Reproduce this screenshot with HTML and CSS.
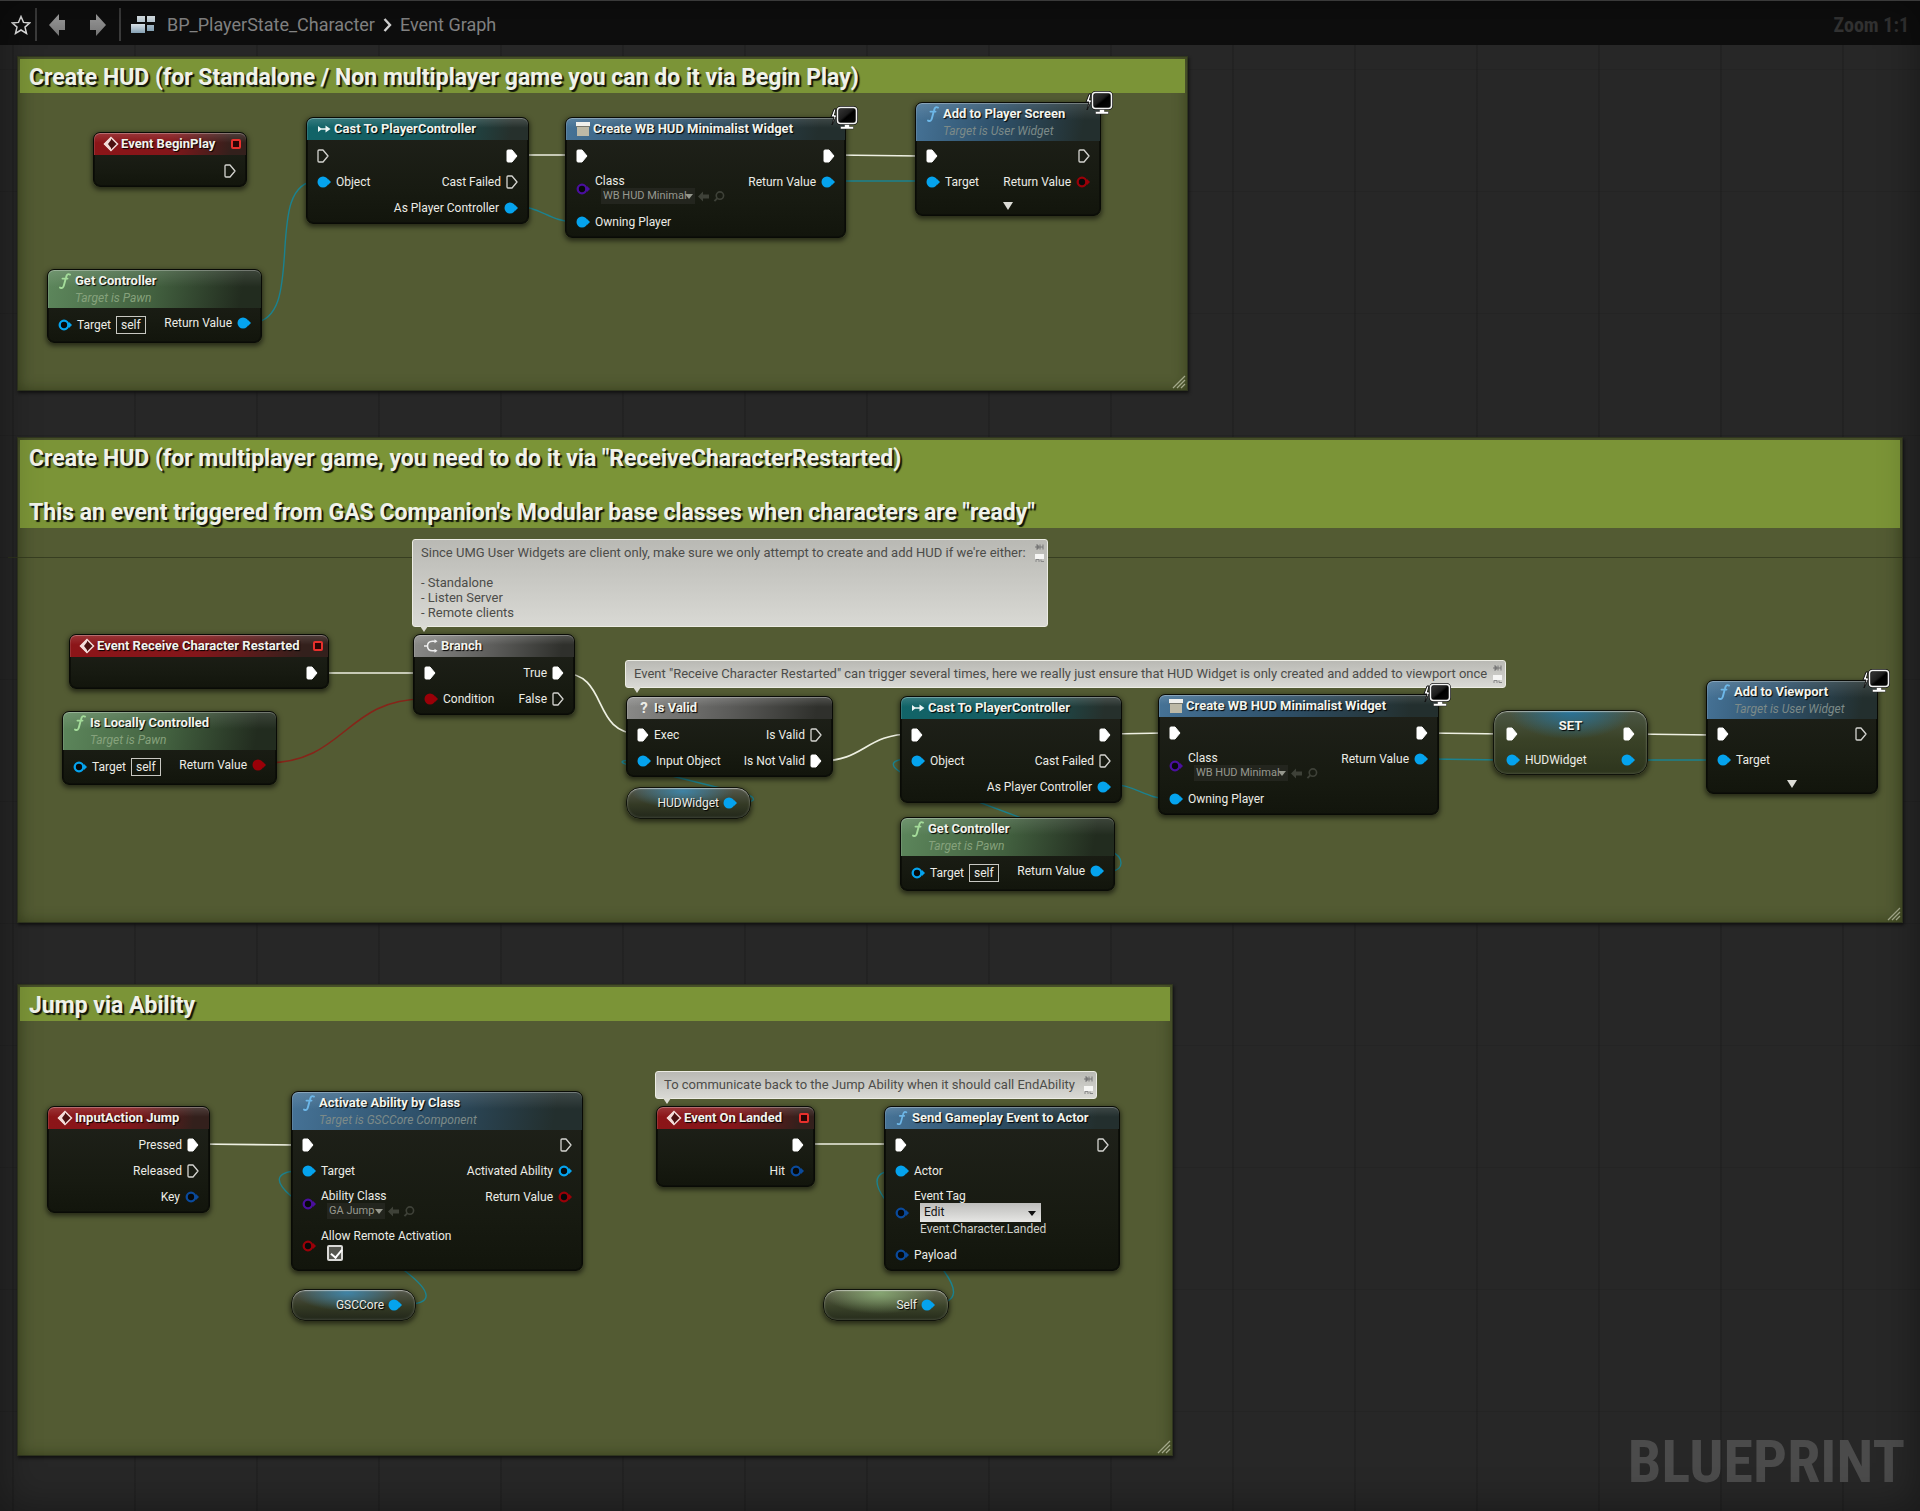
FILE: index.html
```html
<!DOCTYPE html>
<html lang="en">
<head>
<meta charset="utf-8">
<title>BP_PlayerState_Character - Event Graph</title>
<link rel="stylesheet" href="styles.css">
</head>
<body>
<svg class="defs" aria-hidden="true">
  <defs>
    <linearGradient id="screen" x1="0" y1="0" x2="1" y2="1"><stop offset="0" stop-color="#3a3a3a"/><stop offset=".45" stop-color="#1c1c1c"/><stop offset=".55" stop-color="#000"/><stop offset="1" stop-color="#0a0a0a"/></linearGradient>
    <linearGradient id="tile" x1="0" y1="0" x2="0" y2="1"><stop offset="0" stop-color="#e4edf2"/><stop offset="1" stop-color="#86a3b6"/></linearGradient>
    <linearGradient id="arrowfill" x1="0" y1="0" x2="0" y2="1"><stop offset="0" stop-color="#a5a5a5"/><stop offset="1" stop-color="#757575"/></linearGradient>
    <symbol id="exec" viewBox="0 0 12 14"><path d="M1 2q0-1 1-1h4l5 6-5 6H2q-1 0-1-1z" fill="none" stroke="#d4d4d0" stroke-width="1.3" stroke-linejoin="round"/></symbol>
    <symbol id="exec-on" viewBox="0 0 12 14"><path d="M1 2q0-1 1-1h4l5 6-5 6H2q-1 0-1-1z" fill="#fff" stroke="#fff" stroke-linejoin="round"/></symbol>
    <symbol id="pin" viewBox="0 0 14 12"><circle cx="6" cy="6" r="4.3" fill="#06090a" stroke="currentColor" stroke-width="2.3"/><path d="M11 3l3 3-3 3z" fill="currentColor"/></symbol>
    <symbol id="pin-on" viewBox="0 0 14 12"><circle cx="6" cy="6" r="5.5" fill="currentColor"/><path d="M10.500 2.500l3.500 3.500-3.500 3.500z" fill="currentColor"/></symbol>
    <symbol id="fn" viewBox="0 0 16 18"><path d="M13 2.600C10.500 1.200 9.600 3 9 5.500L7 13c-.7 3-1.800 3.600-4 2.600M5.500 6.600h5" fill="none" stroke="currentColor" stroke-width="1.900" stroke-linecap="round"/></symbol>
    <symbol id="event" viewBox="0 0 16 16"><path d="M8 1.500L14.500 8 8 14.500 1.500 8z" fill="#4a1010" stroke="#f3dcd9" stroke-width="1.500"/><path d="M8 1L1 8l7 7V12L5 8l3-4z" fill="#f3dcd9"/></symbol>
    <symbol id="cast" viewBox="0 0 16 12"><path d="M2 3l4 3-4 3zM5 5.300h5v1.400H5zM9.500 2.500l5 3.500-5 3.500z" fill="#eef6f6"/></symbol>
    <symbol id="widget" viewBox="0 0 16 16"><path d="M1 1h14v4H1z" fill="#f0f0ec"/><path d="M2 6h12v9H2z" fill="#bdb9a6"/><path d="M1 5h14v1H1z" fill="#77776d"/></symbol>
    <symbol id="branch" viewBox="0 0 16 16"><path d="M1 8h3M13 3.200H9.500C6 3.200 4.500 5.500 4.500 8s1.500 4.800 5 4.800H13" fill="none" stroke="#eee" stroke-width="1.600"/><path d="M11.500 1.200L14.500 3.200l-3 2zM11.500 10.800l3 2-3 2z" fill="#eee"/></symbol>
    <symbol id="back" viewBox="0 0 12 10"><path d="M0 5l5-5v3h6v4H5v3z" fill="currentColor"/></symbol>
    <symbol id="find" viewBox="0 0 12 12"><circle cx="7" cy="5" r="4" fill="none" stroke="currentColor" stroke-width="1.800"/><path d="M4 8l-3 3" stroke="currentColor" stroke-width="2"/></symbol>
    <symbol id="caret" viewBox="0 0 8 5"><path d="M0 0h8L4 5z" fill="currentColor"/></symbol>
    <symbol id="caret-lg" viewBox="0 0 10 8"><path d="M0 0h10L5 8z" fill="currentColor"/></symbol>
    <symbol id="monitor" viewBox="0 0 28 24"><path d="M4 3L1 11h3l-2 8 5-10H4.500L6 3z" fill="#fff" stroke="#111"/><rect x="7.500" y="1.500" width="19" height="16" rx="3" fill="url(#screen)" stroke="#111" stroke-width="3"/><rect x="7.500" y="1.500" width="19" height="16" rx="3" fill="none" stroke="#f4f4f4" stroke-width="1.500"/><path d="M14.500 18.500h5v2h4V23h-13v-2.500h4z" fill="#fff" stroke="#222" stroke-width=".5"/></symbol>
    <symbol id="grip" viewBox="0 0 14 14"><path d="M1 13L13 1M5 13l8-8M9 13l4-4" stroke="#a3a88a" stroke-width="1.300"/></symbol>
    <symbol id="thumb" viewBox="0 0 10 22"><path d="M0 5h2M2 2.500v5L4.500 5zM5 2.500v5M8 2.500v5M5 5h3" stroke="#777" fill="#777"/><path d="M0 12h9v5H0z" fill="#f6f6f4"/><path d="M1 20V17.500h3V20M6 17.500V19.500h3" stroke="#888" fill="none"/></symbol>
  </defs>
</svg>

<main class="graph">
  <header class="toolbar">
    <button class="tool" aria-label="Favorite"><svg width="20" height="20" viewBox="0 0 20 20"><path d="M10 1.500l2.500 5.900 6.300.5-4.800 4.200 1.500 6.300-5.500-3.400-5.500 3.400L6 12.100 1.200 7.900l6.300-.5z" fill="none" stroke="#e6e6e6" stroke-width="1.500"/></svg></button>
    <span class="divider"></span>
    <button class="tool nav" aria-label="Back"><svg width="17" height="22" viewBox="0 0 17 22"><path d="M0 11L10 0v6h6v10h-6v6z" fill="url(#arrowfill)"/></svg></button>
    <button class="tool nav" aria-label="Forward"><svg width="17" height="22" viewBox="0 0 17 22"><path d="M17 11L7 0v6H1v10h6v6z" fill="url(#arrowfill)"/></svg></button>
    <span class="divider"></span>
    <nav class="crumbs">
      <svg width="24" height="20" viewBox="0 0 24 20"><path d="M6 1h8v6H6zM16 1h8v6h-8zM16 10h7v6h-7z" fill="url(#tile)"/><path d="M0 9h14v9H0z" fill="url(#tile)"/></svg>
      <a href="#">BP_PlayerState_Character</a>
      <svg width="9" height="14" viewBox="0 0 9 14"><path d="M1.500 1L7 7l-5.500 6" fill="none" stroke="#d8d8d8" stroke-width="2.400"/></svg>
      <a href="#">Event Graph</a>
    </nav>
    <span class="zoom">Zoom 1:1</span>
  </header>

  <section class="comment c-standalone"><h2>Create HUD (for Standalone / Non multiplayer game you can do it via Begin Play)</h2><svg class="grip"><use href="#grip"/></svg></section>
  <section class="comment c-multi"><h2>Create HUD (for multiplayer game, you need to do it via "ReceiveCharacterRestarted)<br><br>This an event triggered from GAS Companion's Modular base classes when characters are "ready"</h2><svg class="grip"><use href="#grip"/></svg></section>
  <section class="comment c-jump"><h2>Jump via Ability</h2><svg class="grip"><use href="#grip"/></svg></section>

  <svg class="wires" aria-hidden="true">
    <path class="axis" d="M8 557.500H1903"/>
    <g class="w-exec">
      <path d="M520 155H570M835 155L920 156M318 673H418M562 673C610 673 590 734 640 734M820 761C865 761 865 734 912 734M1110 734L1164 733M1428 733L1506 734M1634 734L1712 735M198 1144L296 1145M800 1144H890"/>
    </g>
    <g class="w-obj">
      <path d="M250 323C310 323 260 182 317 181M515 206C540 206 550 222 576 222M840 181H920M1108 784C1135 784 1145 799 1170 799M1430 759L1506 760M1634 760H1712"/>
      <path d="M736 802H748C756 801 754 797 748 795L636 767C616 762 618 760 640 760"/>
      <path d="M1100 871H1112C1124 870 1124 857 1112 852L904 774C888 766 890 759 910 759"/>
      <path d="M400 1304C438 1306 430 1290 405 1271L291 1196C270 1178 280 1171 300 1171"/>
      <path d="M930 1304C964 1304 954 1285 944 1271L884 1198C870 1178 878 1170 900 1170"/>
    </g>
    <path class="w-bool" d="M266 763C345 763 345 699 424 699"/>
  </svg>

  <!-- Standalone group -->
  <article class="node red n-begin">
    <header><svg class="ico"><use href="#event"/></svg><h3>Event BeginPlay</h3><i class="delegate"></i></header>
    <div class="pins"><div class="out"><div class="row"><svg class="exec"><use href="#exec"/></svg></div></div></div>
  </article>

  <article class="node teal n-cast1">
    <header><svg class="ico"><use href="#cast"/></svg><h3>Cast To PlayerController</h3></header>
    <div class="pins">
      <div class="in"><div class="row"><svg class="exec"><use href="#exec"/></svg></div><div class="row"><svg class="pin obj"><use href="#pin-on"/></svg>Object</div></div>
      <div class="out"><div class="row"><svg class="exec"><use href="#exec-on"/></svg></div><div class="row">Cast Failed<svg class="exec"><use href="#exec"/></svg></div><div class="row">As Player Controller<svg class="pin obj"><use href="#pin-on"/></svg></div></div>
    </div>
  </article>

  <article class="node blue n-create1">
    <header><svg class="ico"><use href="#widget"/></svg><h3>Create WB HUD Minimalist Widget</h3></header>
    <svg class="badge"><use href="#monitor"/></svg>
    <div class="pins">
      <div class="in">
        <div class="row"><svg class="exec"><use href="#exec-on"/></svg></div>
        <div class="row field"><svg class="pin class"><use href="#pin"/></svg><div class="stack"><label for="class1">Class</label><div class="asset"><span class="pick"><select id="class1" class="wide"><option>WB HUD Minimalist</option></select><svg><use href="#caret"/></svg></span><button aria-label="Use selected"><svg><use href="#back"/></svg></button><button aria-label="Browse"><svg><use href="#find"/></svg></button></div></div></div>
        <div class="row"><svg class="pin obj"><use href="#pin-on"/></svg>Owning Player</div>
      </div>
      <div class="out"><div class="row"><svg class="exec"><use href="#exec-on"/></svg></div><div class="row">Return Value<svg class="pin obj"><use href="#pin-on"/></svg></div></div>
    </div>
  </article>

  <article class="node blue tall n-screen">
    <header><svg class="ico"><use href="#fn"/></svg><h3>Add to Player Screen</h3><p>Target is User Widget</p></header>
    <svg class="badge"><use href="#monitor"/></svg>
    <div class="pins">
      <div class="in"><div class="row"><svg class="exec"><use href="#exec-on"/></svg></div><div class="row"><svg class="pin obj"><use href="#pin-on"/></svg>Target</div></div>
      <div class="out"><div class="row"><svg class="exec"><use href="#exec"/></svg></div><div class="row">Return Value<svg class="pin bool"><use href="#pin"/></svg></div></div>
    </div>
    <button class="more" aria-label="Show advanced"><svg><use href="#caret-lg"/></svg></button>
  </article>

  <article class="node green tall n-getc1">
    <header><svg class="ico"><use href="#fn"/></svg><h3>Get Controller</h3><p>Target is Pawn</p></header>
    <div class="pins">
      <div class="in"><div class="row self-row"><svg class="pin obj"><use href="#pin"/></svg>Target<span class="self">self</span></div></div>
      <div class="out"><div class="row">Return Value<svg class="pin obj"><use href="#pin-on"/></svg></div></div>
    </div>
  </article>

  <!-- Multiplayer group -->
  <article class="node red n-restart">
    <header><svg class="ico"><use href="#event"/></svg><h3>Event Receive Character Restarted</h3><i class="delegate"></i></header>
    <div class="pins"><div class="out"><div class="row"><svg class="exec"><use href="#exec-on"/></svg></div></div></div>
  </article>

  <article class="node green tall n-local">
    <header><svg class="ico"><use href="#fn"/></svg><h3>Is Locally Controlled</h3><p>Target is Pawn</p></header>
    <div class="pins">
      <div class="in"><div class="row self-row"><svg class="pin obj"><use href="#pin"/></svg>Target<span class="self">self</span></div></div>
      <div class="out"><div class="row">Return Value<svg class="pin bool"><use href="#pin-on"/></svg></div></div>
    </div>
  </article>

  <article class="node grey n-branch">
    <header><svg class="ico"><use href="#branch"/></svg><h3>Branch</h3></header>
    <div class="pins">
      <div class="in"><div class="row"><svg class="exec"><use href="#exec-on"/></svg></div><div class="row"><svg class="pin bool"><use href="#pin-on"/></svg>Condition</div></div>
      <div class="out"><div class="row">True<svg class="exec"><use href="#exec-on"/></svg></div><div class="row">False<svg class="exec"><use href="#exec"/></svg></div></div>
    </div>
  </article>

  <article class="node grey n-valid">
    <header><span class="ico q">?</span><h3>Is Valid</h3></header>
    <div class="pins">
      <div class="in"><div class="row"><svg class="exec"><use href="#exec-on"/></svg>Exec</div><div class="row"><svg class="pin obj"><use href="#pin-on"/></svg>Input Object</div></div>
      <div class="out"><div class="row">Is Valid<svg class="exec"><use href="#exec"/></svg></div><div class="row">Is Not Valid<svg class="exec"><use href="#exec-on"/></svg></div></div>
    </div>
  </article>

  <article class="var glow-blue n-hud">HUDWidget<svg class="pin obj"><use href="#pin-on"/></svg></article>

  <article class="node teal n-cast2">
    <header><svg class="ico"><use href="#cast"/></svg><h3>Cast To PlayerController</h3></header>
    <div class="pins">
      <div class="in"><div class="row"><svg class="exec"><use href="#exec-on"/></svg></div><div class="row"><svg class="pin obj"><use href="#pin-on"/></svg>Object</div></div>
      <div class="out"><div class="row"><svg class="exec"><use href="#exec-on"/></svg></div><div class="row">Cast Failed<svg class="exec"><use href="#exec"/></svg></div><div class="row">As Player Controller<svg class="pin obj"><use href="#pin-on"/></svg></div></div>
    </div>
  </article>

  <article class="node green tall n-getc2">
    <header><svg class="ico"><use href="#fn"/></svg><h3>Get Controller</h3><p>Target is Pawn</p></header>
    <div class="pins">
      <div class="in"><div class="row self-row"><svg class="pin obj"><use href="#pin"/></svg>Target<span class="self">self</span></div></div>
      <div class="out"><div class="row">Return Value<svg class="pin obj"><use href="#pin-on"/></svg></div></div>
    </div>
  </article>

  <aside class="bubble b-once"><p>Event "Receive Character Restarted" can trigger several times, here we really just ensure that HUD Widget is only created and added to viewport once</p><svg><use href="#thumb"/></svg></aside>

  <article class="node blue n-create2">
    <header><svg class="ico"><use href="#widget"/></svg><h3>Create WB HUD Minimalist Widget</h3></header>
    <svg class="badge"><use href="#monitor"/></svg>
    <div class="pins">
      <div class="in">
        <div class="row"><svg class="exec"><use href="#exec-on"/></svg></div>
        <div class="row field"><svg class="pin class"><use href="#pin"/></svg><div class="stack"><label for="class2">Class</label><div class="asset"><span class="pick"><select id="class2" class="wide"><option>WB HUD Minimalist</option></select><svg><use href="#caret"/></svg></span><button aria-label="Use selected"><svg><use href="#back"/></svg></button><button aria-label="Browse"><svg><use href="#find"/></svg></button></div></div></div>
        <div class="row"><svg class="pin obj"><use href="#pin-on"/></svg>Owning Player</div>
      </div>
      <div class="out"><div class="row"><svg class="exec"><use href="#exec-on"/></svg></div><div class="row">Return Value<svg class="pin obj"><use href="#pin-on"/></svg></div></div>
    </div>
  </article>

  <article class="set n-set">
    <h3>SET</h3>
    <div class="pins">
      <div class="in"><div class="row"><svg class="exec"><use href="#exec-on"/></svg></div><div class="row"><svg class="pin obj"><use href="#pin-on"/></svg>HUDWidget</div></div>
      <div class="out"><div class="row"><svg class="exec"><use href="#exec-on"/></svg></div><div class="row"><svg class="pin obj"><use href="#pin-on"/></svg></div></div>
    </div>
  </article>

  <article class="node blue tall n-viewport">
    <header><svg class="ico"><use href="#fn"/></svg><h3>Add to Viewport</h3><p>Target is User Widget</p></header>
    <svg class="badge"><use href="#monitor"/></svg>
    <div class="pins">
      <div class="in"><div class="row"><svg class="exec"><use href="#exec-on"/></svg></div><div class="row"><svg class="pin obj"><use href="#pin-on"/></svg>Target</div></div>
      <div class="out"><div class="row"><svg class="exec"><use href="#exec"/></svg></div></div>
    </div>
    <button class="more" aria-label="Show advanced"><svg><use href="#caret-lg"/></svg></button>
  </article>

  <aside class="bubble b-clients"><p>Since UMG User Widgets are client only, make sure we only attempt to create and add HUD if we're either:<br><br>- Standalone<br>- Listen Server<br>- Remote clients</p><svg><use href="#thumb"/></svg></aside>

  <!-- Jump group -->
  <article class="node red n-input">
    <header><svg class="ico"><use href="#event"/></svg><h3>InputAction Jump</h3></header>
    <div class="pins"><div class="out"><div class="row">Pressed<svg class="exec"><use href="#exec-on"/></svg></div><div class="row">Released<svg class="exec"><use href="#exec"/></svg></div><div class="row">Key<svg class="pin struct"><use href="#pin"/></svg></div></div></div>
  </article>

  <article class="node blue tall n-activate">
    <header><svg class="ico"><use href="#fn"/></svg><h3>Activate Ability by Class</h3><p>Target is GSCCore Component</p></header>
    <div class="pins">
      <div class="in">
        <div class="row"><svg class="exec"><use href="#exec-on"/></svg></div>
        <div class="row"><svg class="pin obj"><use href="#pin-on"/></svg>Target</div>
        <div class="row field"><svg class="pin class"><use href="#pin"/></svg><div class="stack"><label for="ability">Ability Class</label><div class="asset"><span class="pick"><select id="ability" class="narrow"><option>GA Jump</option></select><svg><use href="#caret"/></svg></span><button aria-label="Use selected"><svg><use href="#back"/></svg></button><button aria-label="Browse"><svg><use href="#find"/></svg></button></div></div></div>
        <div class="row check-row"><svg class="pin bool"><use href="#pin"/></svg><div class="stack"><label for="remote">Allow Remote Activation</label><input id="remote" type="checkbox" checked></div></div>
      </div>
      <div class="out"><div class="row"><svg class="exec"><use href="#exec"/></svg></div><div class="row">Activated Ability<svg class="pin obj"><use href="#pin"/></svg></div><div class="row">Return Value<svg class="pin bool"><use href="#pin"/></svg></div></div>
    </div>
  </article>

  <article class="var glow-blue n-core">GSCCore<svg class="pin obj"><use href="#pin-on"/></svg></article>

  <article class="node red n-landed">
    <header><svg class="ico"><use href="#event"/></svg><h3>Event On Landed</h3><i class="delegate"></i></header>
    <div class="pins"><div class="out"><div class="row"><svg class="exec"><use href="#exec-on"/></svg></div><div class="row">Hit<svg class="pin struct"><use href="#pin"/></svg></div></div></div>
  </article>

  <article class="node blue n-send">
    <header><svg class="ico"><use href="#fn"/></svg><h3>Send Gameplay Event to Actor</h3></header>
    <div class="pins">
      <div class="in">
        <div class="row"><svg class="exec"><use href="#exec-on"/></svg></div>
        <div class="row"><svg class="pin obj"><use href="#pin-on"/></svg>Actor</div>
        <div class="row tag-row"><svg class="pin struct"><use href="#pin"/></svg><div class="stack"><label for="tag">Event Tag</label><span class="pick edit"><select id="tag"><option>Edit</option></select><svg><use href="#caret"/></svg></span><span class="tag">Event.Character.Landed</span></div></div>
        <div class="row"><svg class="pin struct"><use href="#pin"/></svg>Payload</div>
      </div>
      <div class="out"><div class="row"><svg class="exec"><use href="#exec"/></svg></div></div>
    </div>
  </article>

  <article class="var glow-green n-self">Self<svg class="pin obj"><use href="#pin-on"/></svg></article>

  <aside class="bubble b-jump"><p>To communicate back to the Jump Ability when it should call EndAbility</p><svg><use href="#thumb"/></svg></aside>

  <div class="watermark">BLUEPRINT</div>
</main>
</body>
</html>
```
FILE: styles.css
```css
* { box-sizing: border-box; }
body { margin: 0; background: #262626; color: #ecece6; font: 12px/14px Roboto, "Liberation Sans", sans-serif; }
h2, h3, p { margin: 0; }
svg { display: block; flex: none; }
button { border: 0; padding: 0; background: none; color: inherit; }
.defs { position: absolute; width: 0; height: 0; }

/* Canvas */
.graph {
  position: relative;
  min-height: 100vh;
  overflow: hidden;
  border-top: 1px solid #3a3a3a;
  background:
    repeating-linear-gradient(90deg, transparent 0 12px, rgba(0,0,0,.12) 12px 14px, transparent 14px 122px),
    repeating-linear-gradient(180deg, transparent 0 68px, rgba(0,0,0,.08) 68px 69px, transparent 69px 122px),
    #272727;
}
.graph::after {
  content: "";
  position: absolute;
  inset: 0;
  box-shadow: inset 0 0 36px 4px rgba(0,0,0,.35);
  pointer-events: none;
}

/* Toolbar */
.toolbar { display: flex; align-items: center; height: 44px; padding: 3px 11px 0; background: #0e0e0e; }
.tool { width: 20px; height: 22px; display: flex; align-items: center; justify-content: center; }
.nav { width: 40px; }
.divider { width: 2px; height: 33px; margin: 0 0 0 4px; background: #3c3c3c; }
.nav + .divider { margin-left: 2px; }
.crumbs { display: flex; align-items: center; gap: 8px; margin-left: 10px; font-size: 18px; line-height: 22px; }
.crumbs a { color: #868686; text-decoration: none; }
.crumbs a:first-of-type { margin-left: 4px; }
.zoom { margin-left: auto; color: #333; font: bold 20px/22px "Roboto Condensed", Roboto, sans-serif; }

/* Comment boxes */
.comment {
  position: absolute;
  border: 1px solid #30361f;
  background: #535b33;
  box-shadow: 1px 2px 3px #111, inset 0 0 14px rgba(38,48,14,.6);
}
.comment h2 {
  margin: 2px;
  padding: 5px 9px 2px;
  background: #7b9437;
  color: #f0f2ea;
  font-size: 23px;
  line-height: 27px;
  font-weight: 700;
  text-shadow: 2px 2px 1px #10140a;
}
.grip { position: absolute; right: 1px; bottom: 1px; width: 14px; height: 14px; }
.c-standalone { left: 17px; top: 55px; width: 1171px; height: 335px; }
.c-multi { left: 17px; top: 436px; width: 1886px; height: 486px; }
.c-jump { left: 17px; top: 983px; width: 1156px; height: 472px; }

/* Wires */
.wires { position: absolute; left: 0; top: -1px; width: 100%; height: 100%; fill: none; }
.axis { stroke: #31371d; opacity: .8; }
.w-exec { stroke: #eef0e2; stroke-width: 1.7; }
.w-obj { stroke: #1b8290; stroke-width: 1.4; }
.w-bool { stroke: #862419; stroke-width: 1.5; }

/* Nodes */
.node {
  position: absolute;
  border: 1px solid #090b06;
  border-radius: 7px;
  background: linear-gradient(#20221b, #171a11 70%, #12150c);
  box-shadow: 0 2px 5px 1px rgba(0,0,0,.55), inset 0 0 0 1px #0d0f09;
}
.node header {
  display: grid;
  grid-template-columns: 16px 1fr auto;
  column-gap: 2px;
  align-items: center;
  height: 22px;
  padding: 0 5px 0 9px;
  border-radius: 6px 6px 0 0;
  box-shadow: inset 0 1px 0 rgba(255,255,255,.28), inset 1px 0 0 rgba(255,255,255,.12);
}
.tall header { height: 38px; grid-template-rows: 22px 12px; align-content: start; }
.node h3, .set h3 { font-size: 13px; line-height: 22px; font-weight: 700; color: #f2f4ee; text-shadow: 1px 1px 1px #000; white-space: nowrap; }
.node p { grid-column: 2; font-style: italic; color: #7c8a88; white-space: nowrap; }
.green p { color: #86a27c; }
.ico { width: 16px; height: 16px; }
.tall .ico { height: 18px; }
.q { font: bold 15px/17px Roboto, sans-serif; text-align: center; }
.red header { background: linear-gradient(rgba(255,255,255,.14), transparent 45%), linear-gradient(100deg, #8c1518, #84161a 50%, #33201c 90%); }
.teal header { background: linear-gradient(rgba(255,255,255,.16), transparent 45%), linear-gradient(100deg, #116468, #175c60 50%, #26302c 92%); }
.blue header { background: linear-gradient(rgba(255,255,255,.12), transparent 45%), linear-gradient(100deg, #467397, #2e5069 45%, #232f2e 90%); }
.green header { background: linear-gradient(rgba(255,255,255,.12), transparent 45%), linear-gradient(100deg, #5d875c, #42603f 50%, #222c1f 90%); }
.grey header { background: linear-gradient(rgba(255,255,255,.16), transparent 45%), linear-gradient(100deg, #8a8a88, #5c5c5a 50%, #2f302c 92%); }
.blue .ico { color: #6db7e8; }
.green .ico { color: #a4dc9a; }
.delegate { width: 10px; height: 10px; border: 2px solid #e8302c; border-radius: 2px; background: #2a0505; }
.badge { position: absolute; top: -12px; right: -13px; width: 28px; height: 24px; }

.pins { display: flex; justify-content: space-between; padding: 3px 10px 2px; white-space: nowrap; }
.tall .pins { padding: 2px 10px; }
.in, .out { display: flex; flex-direction: column; }
.out { align-items: flex-end; margin-left: auto; }
.row { display: flex; align-items: center; gap: 5px; height: 26px; }
.self-row { height: 30px; }
.exec { width: 12px; height: 14px; }
.pin { width: 14px; height: 12px; }
.obj { color: #05a3ee; }
.bool { color: #9a0008; }
.class { color: #4a0f9e; }
.struct { color: #0a4a9c; }
.self { border: 1px solid #c8c8c2; padding: 1px 4px; }
.field { height: 40px; }
.check-row { height: 44px; }
.tag-row { height: 58px; }
.stack { display: flex; flex-direction: column; align-self: stretch; align-items: flex-start; padding-top: 5px; }
.asset { display: flex; align-items: center; gap: 3px; margin-left: 6px; color: #3e4138; }
.asset button svg { width: 12px; height: 11px; }
.pick { position: relative; display: block; color: #96988e; }
.pick select { appearance: none; display: block; height: 16px; border: 0; margin: 0; padding: 0 8px 0 2px; background: #23251e; color: inherit; font: 11px/16px Roboto, sans-serif; overflow: hidden; }
.pick .wide { width: 94px; }
.pick .narrow { width: 58px; }
.pick svg { position: absolute; right: 2px; top: 6px; width: 8px; height: 5px; pointer-events: none; }
.edit { margin-left: 6px; color: #111; }
.edit select { width: 121px; height: 19px; padding-left: 4px; background: linear-gradient(#bdbdbb, #e6e6e4); font: 12px/19px Roboto, sans-serif; }
.edit svg { right: 5px; top: 8px; }
.tag { margin-left: 6px; color: #cfd0ca; }
.check-row input {
  appearance: none;
  position: relative;
  width: 16px;
  height: 16px;
  margin: 2px 0 0 6px;
  border: 2px solid #d9d9d6;
  border-radius: 2px;
  background: #55564f;
}
.check-row input::after { content: ""; position: absolute; left: 4px; top: 0; width: 5px; height: 9px; border: solid #fff; border-width: 0 2px 2px 0; transform: rotate(40deg); }
.more { display: block; width: 100%; height: 18px; color: #dcdcd6; }
.more svg { width: 10px; height: 8px; margin: 0 auto; }

/* Variable getters and setter */
.var, .set {
  position: absolute;
  border: 1px solid #10130b;
  border-radius: 14px;
  box-shadow: 0 2px 5px 1px rgba(0,0,0,.55), inset 0 1px 1px rgba(255,255,255,.45), inset 0 0 3px rgba(255,255,255,.25);
}
.var { display: flex; align-items: center; justify-content: flex-end; gap: 4px; height: 32px; padding-right: 13px; text-shadow: 1px 1px 1px #000; }
.glow-blue { background: radial-gradient(ellipse 42% 60% at 45% 10%, #3f83a5, transparent), linear-gradient(#55584c, #343a25 55%, #22271a); }
.glow-green { background: radial-gradient(ellipse 45% 70% at 45% 10%, #86a572, transparent), linear-gradient(#62664f, #3b432a 55%, #262c1b); }
.set { height: 65px; padding-top: 10px; background: radial-gradient(ellipse 40% 45% at 50% 0, #28739a, transparent), linear-gradient(#4c5745, #3a4227 45%, #2d351d); }
.set .pins { padding: 0 12px; }
.set h3 { position: absolute; inset: 4px 0 auto; text-align: center; }

/* Comment bubbles */
.bubble {
  position: absolute;
  display: flex;
  justify-content: space-between;
  padding: 5px 2px 6px 8px;
  border: 1px solid #ecece4;
  border-radius: 3px;
  background: linear-gradient(#b9b9b4, #d9d9d4);
  color: #4c4c49;
  font-size: 13px;
  line-height: 15px;
  white-space: nowrap;
}
.bubble::after { content: ""; position: absolute; left: 7px; top: 100%; border: solid transparent; border-width: 6px 4px 0; border-top-color: #dcdcd4; }
.bubble svg { width: 10px; height: 22px; margin: -3px 0 -4px; }

/* Node placement on the canvas */
.n-begin { left: 93px; top: 131px; width: 154px; }
.n-cast1 { left: 306px; top: 116px; width: 223px; }
.n-create1 { left: 565px; top: 116px; width: 281px; }
.n-screen { left: 915px; top: 101px; width: 186px; }
.n-getc1 { left: 47px; top: 268px; width: 215px; }
.n-restart { left: 69px; top: 633px; width: 260px; }
.n-local { left: 62px; top: 710px; width: 215px; }
.n-branch { left: 413px; top: 633px; width: 162px; }
.n-valid { left: 626px; top: 695px; width: 207px; }
.n-hud { left: 626px; top: 786px; width: 125px; }
.n-cast2 { left: 900px; top: 695px; width: 222px; }
.n-getc2 { left: 900px; top: 816px; width: 215px; }
.n-create2 { left: 1158px; top: 693px; width: 281px; }
.n-set { left: 1493px; top: 709px; width: 155px; }
.n-viewport { left: 1706px; top: 679px; width: 172px; }
.n-input { left: 47px; top: 1105px; width: 163px; }
.n-activate { left: 291px; top: 1090px; width: 292px; }
.n-core { left: 291px; top: 1288px; width: 125px; }
.n-landed { left: 656px; top: 1105px; width: 159px; }
.n-send { left: 884px; top: 1105px; width: 236px; }
.n-self { left: 823px; top: 1288px; width: 126px; }
.b-clients { left: 412px; top: 538px; width: 636px; }
.b-once { left: 625px; top: 659px; width: 881px; }
.b-jump { left: 655px; top: 1070px; width: 442px; }

.watermark { position: absolute; right: 15px; bottom: 19px; color: #4b4b4b; font: bold 60px/60px "Roboto Condensed", Roboto, sans-serif; }
```
